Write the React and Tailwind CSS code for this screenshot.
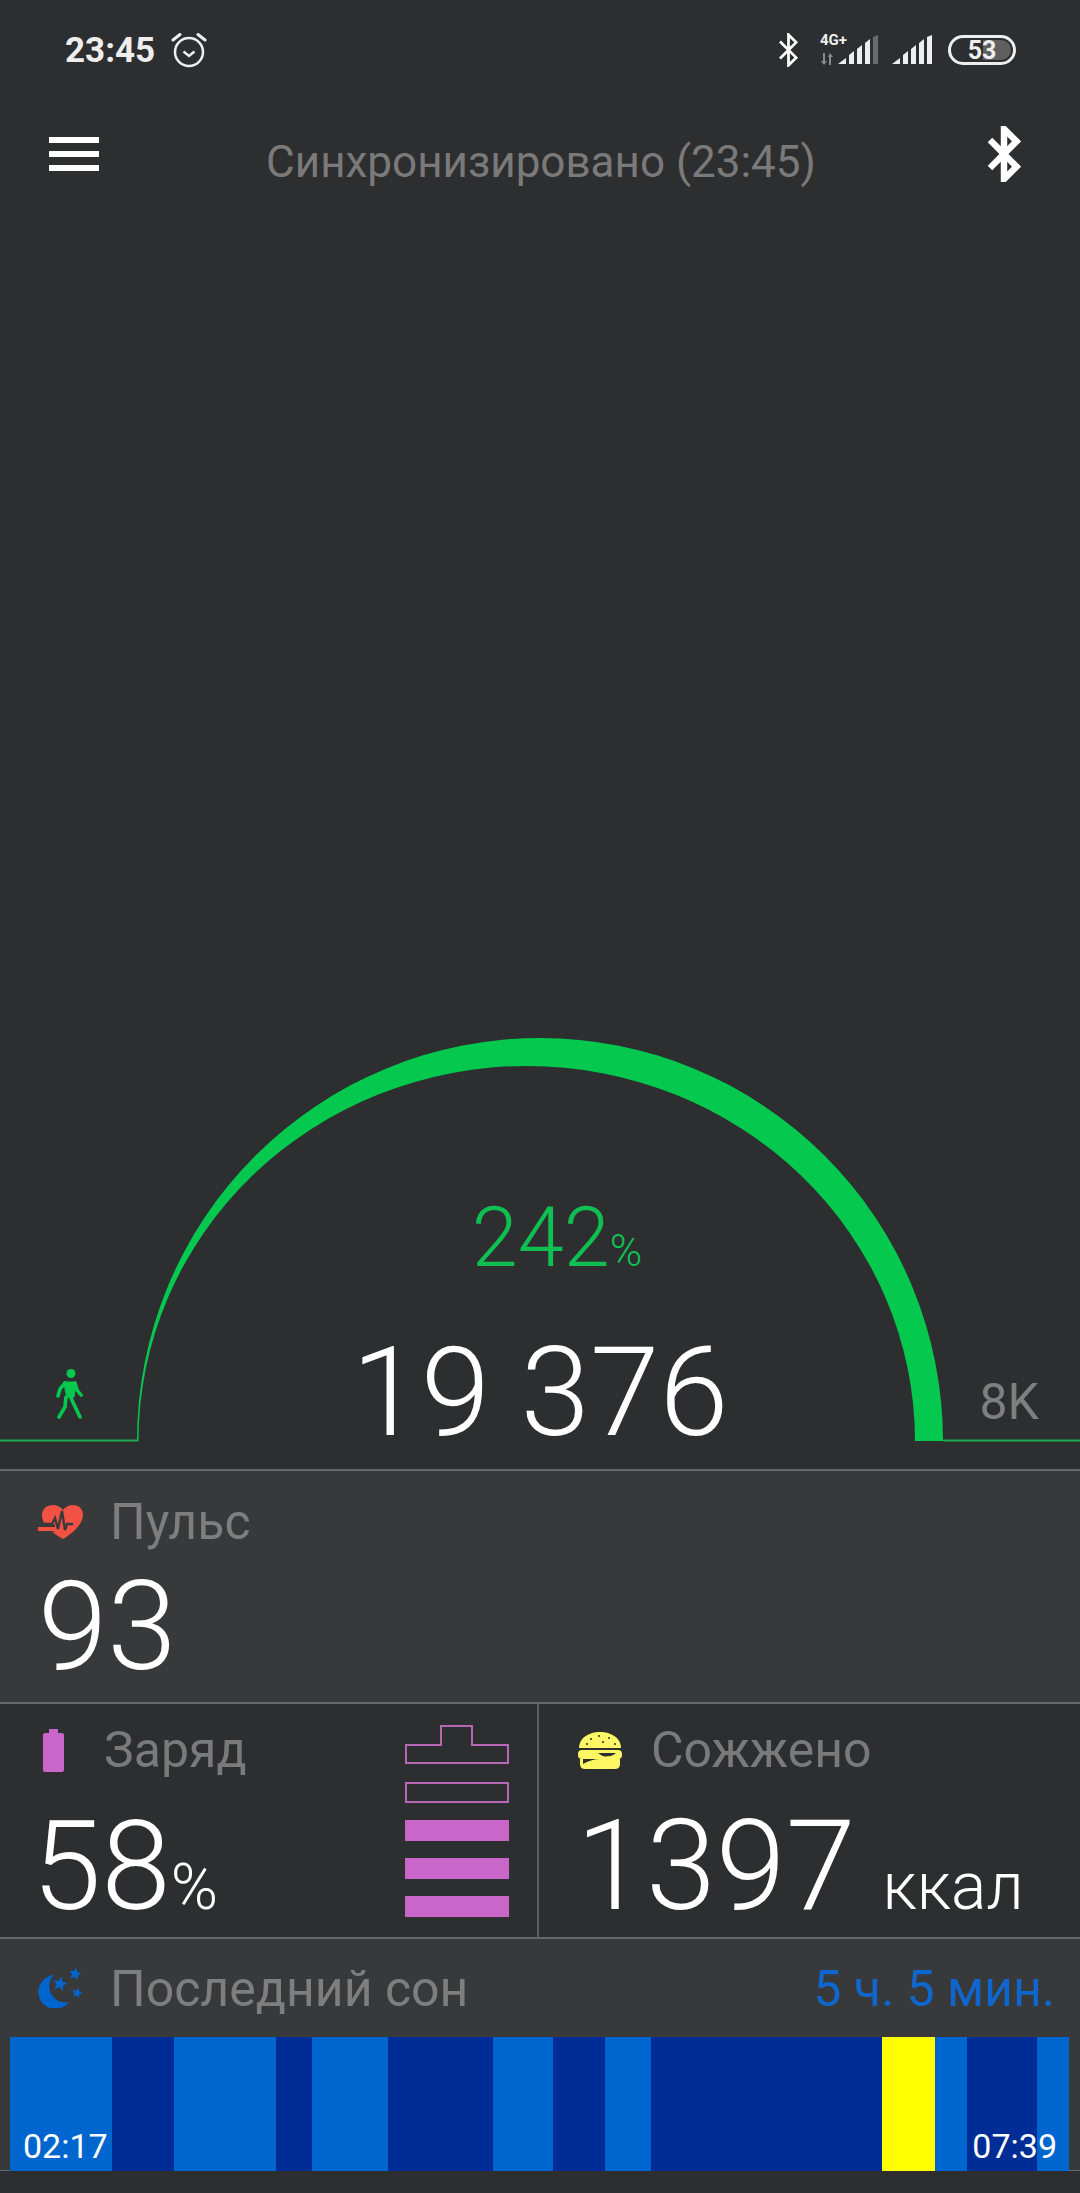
// Экран браслета: шаги, пульс, заряд, калории и сон
const sleepSegments = [
  "w-[102px] bg-[#0066cf]",
  "w-[62px] bg-[#002c96]",
  "w-[102px] bg-[#0066cf]",
  "w-[36px] bg-[#002c96]",
  "w-[76px] bg-[#0066cf]",
  "w-[105px] bg-[#002c96]",
  "w-[60px] bg-[#0066cf]",
  "w-[52px] bg-[#002c96]",
  "w-[46px] bg-[#0066cf]",
  "w-[231px] bg-[#002c96]",
  "w-[53px] bg-[#ffff00]",
  "w-[32px] bg-[#0066cf]",
  "w-[70px] bg-[#002c96]",
  "w-[32px] bg-[#0066cf]",
];

function starPoints(cx, cy, r) {
  const pts = [];
  for (let i = 0; i < 10; i++) {
    const rad = i % 2 === 0 ? r : r * 0.45;
    const a = -Math.PI / 2 + 0.2 + (i * Math.PI) / 5;
    pts.push(`${cx + rad * Math.cos(a)},${cy + rad * Math.sin(a)}`);
  }
  return pts.join(" ");
}

function BluetoothIcon({ className, strokeWidth }) {
  return (
    <svg className={className} viewBox="0 0 24 40" fill="none" stroke="#fff" strokeWidth={strokeWidth}>
      <path d="M2 10 L21 29 L12 38 V2 L21 11 L2 30" />
    </svg>
  );
}

function SignalIcon({ lastColor }) {
  return (
    <svg className="w-[40px] h-[30px]" viewBox="0 0 40 30" fill="#eeeeee">
      <path d="M0 29 L8 23 V29 Z" />
      <path d="M11 20 L16 16 V29 H11 Z" />
      <path d="M19 14 L24 10 V29 H19 Z" />
      <path d="M27 8 L32 4 V29 H27 Z" />
      <path d="M35 2 L40 0 V29 H35 Z" fill={lastColor} />
    </svg>
  );
}

function StatusBar() {
  return (
    <div className="h-[100px] flex items-center justify-between pl-[65px] pr-[64px]">
      <div className="flex items-center gap-[16px]">
        <span className="text-[35px] font-bold text-[#eeeeee] leading-none">23:45</span>
        <svg className="w-[36px] h-[36px]" viewBox="0 0 36 36" fill="none" stroke="#eeeeee" strokeWidth="2.5">
          <circle cx="18" cy="20" r="14" />
          <path d="M12.5 19.5 L18 24 L23.5 19.5" />
          <path d="M2 8 L9 2.5 M34 8 L27 2.5" strokeLinecap="round" strokeWidth="3" />
        </svg>
      </div>
      <div className="flex items-center">
        <BluetoothIcon className="w-[21px] h-[34px]" strokeWidth="3.2" />
        <div className="relative w-[58px] h-[30px] ml-[21px]">
          <span className="absolute left-0 -top-[2px] text-[15px] font-bold text-[#eeeeee] leading-none">4G+</span>
          <svg className="absolute left-0 bottom-0 w-[13px] h-[12px]" viewBox="0 0 13 12" fill="#8a8a8a">
            <path d="M3 0 H5 V8 L7 8 L4 12 L1 8 H3 Z" />
            <path d="M9 12 H11 V4 H13 L10 0 L8 4 H9 Z" />
          </svg>
          <div className="absolute right-0 top-0">
            <SignalIcon lastColor="#6a6a6a" />
          </div>
        </div>
        <div className="ml-[14px]">
          <SignalIcon lastColor="#eeeeee" />
        </div>
        <div className="relative ml-[16px] w-[68px] h-[30px] rounded-full border-[3px] border-[#eeeeee] flex items-center justify-center overflow-hidden">
          <div className="absolute right-[2px] top-[2px] bottom-[2px] w-[28px] rounded-r-full bg-[#5f5f5f]" />
          <span className="relative text-[25px] font-bold text-[#eeeeee] leading-none">53</span>
        </div>
      </div>
    </div>
  );
}

function Header() {
  return (
    <div className="h-[108px] grid grid-cols-[1fr_auto_1fr] items-center pl-[49px] pr-[59px]">
      <div className="flex flex-col gap-[8px] w-[50px]">
        <div className="h-[6px] bg-white" />
        <div className="h-[6px] bg-white" />
        <div className="h-[6px] bg-white" />
      </div>
      <span className="text-[44px] text-[#7a7a7a] leading-none mt-[16px] ml-[12px]">Синхронизировано (23:45)</span>
      <div className="flex justify-end">
        <BluetoothIcon className="w-[34px] h-[56px]" strokeWidth="4.6" />
      </div>
    </div>
  );
}

function Gauge() {
  return (
    <div className="relative flex-1 flex flex-col items-center justify-end pb-[13px]">
      <svg className="absolute left-0 bottom-[26px] w-[1080px] h-[405px]" viewBox="0 1038 1080 405">
        <path d="M0 1440.5 H138 M943 1440.5 H1080" stroke="#1fa750" strokeWidth="2" fill="none" />
        <path d="M137 1441 A403 403 0 0 1 943 1441 H915 A388.25 375 0 0 0 138.5 1441 Z" fill="#05c94e" />
      </svg>
      <svg className="absolute left-[56px] bottom-[50px] w-[27px] h-[50px]" viewBox="0 0 27 50" fill="none" stroke="#05c94e" strokeWidth="3.6" strokeLinecap="round" strokeLinejoin="round">
        <circle cx="15" cy="4.5" r="4.5" fill="#05c94e" stroke="none" />
        <path d="M8 13 H20 L18 28 H11 Z" fill="#05c94e" strokeWidth="1" />
        <path d="M9 14 L4 20 L2 27" />
        <path d="M19 14 L21 21 L25 26" />
        <path d="M14 27 L24 48" />
        <path d="M10 28 L9 38 L3 48" />
      </svg>
      <span className="absolute right-[41px] bottom-[42px] text-[50px] text-[#7f7f7f] leading-none">8K</span>
      <div className="relative flex items-baseline ml-[34px] text-[#0fbf52] font-light">
        <span className="text-[83px] leading-[84px]">242</span>
        <span className="text-[44px] leading-none">%</span>
      </div>
      <div className="relative mt-[49px] text-[125px] leading-[127px] font-light text-white">19 376</div>
    </div>
  );
}

function PulsePanel() {
  return (
    <div className="h-[233px] bg-[#38393b] border-t-2 border-[#66676a] pl-[38px] pt-[22px]">
      <div className="flex items-center h-[58px]">
        <svg className="w-[45px] h-[36px]" viewBox="0 0 45 36">
          <path d="M25 35 C20 32 12 27 8 22 C5 18 4 14 4 11 C4 5 9 1 15 1 C19 1 23 3 25 6 C27 3 31 1 35 1 C41 1 45 5 45 11 C45 20 34 30 25 35 Z" fill="#f25244" />
          <path d="M0 24 H17" stroke="#38393b" strokeWidth="7" />
          <path d="M1 25 H17" stroke="#f25244" strokeWidth="4" strokeLinecap="round" />
          <path d="M5 20 H14 L17 14 L20 25 L24 7 L27 26 L29 20 H35" stroke="#38393b" strokeWidth="2.4" fill="none" />
        </svg>
        <span className="ml-[27px] text-[50px] text-[#7e7e7e] leading-none">Пульс</span>
      </div>
      <div className="mt-[12px] text-[125px] leading-[127px] font-light text-white">93</div>
    </div>
  );
}

function BatteryPanel() {
  return (
    <div className="w-[539px] border-r-2 border-[#5c5d60] pl-[32px] pr-[28px] flex justify-between">
      <div className="pt-[17px]">
        <div className="flex items-center h-[58px]">
          <svg className="ml-[11px] w-[21px] h-[43px]" viewBox="0 0 21 43" fill="#c966c9">
            <path d="M6 0 H15 V4 H19 Q21 4 21 6 V41 Q21 43 19 43 H2 Q0 43 0 41 V6 Q0 4 2 4 H6 Z" />
          </svg>
          <span className="ml-[40px] text-[50px] text-[#7a7a7a] leading-none">Заряд</span>
        </div>
        <div className="mt-[24px] flex items-baseline font-light text-white">
          <span className="text-[125px] leading-[127px]">58</span>
          <span className="text-[64px] leading-none">%</span>
        </div>
      </div>
      <div className="pt-[21px] w-[104px]">
        <svg className="w-[104px] h-[39px]" viewBox="0 0 104 39" fill="none" stroke="#b566b5" strokeWidth="2">
          <path d="M1 20 H36 V1 H67 V20 H103 V38 H1 Z" />
        </svg>
        <div className="mt-[18px] h-[21px] border-2 border-[#b566b5]" />
        <div className="mt-[17px] h-[21px] bg-[#c966c9]" />
        <div className="mt-[17px] h-[21px] bg-[#c966c9]" />
        <div className="mt-[17px] h-[21px] bg-[#c966c9]" />
      </div>
    </div>
  );
}

function CaloriesPanel() {
  return (
    <div className="flex-1 pl-[39px] pt-[17px]">
      <div className="flex items-center h-[58px]">
        <svg className="w-[44px] h-[37px]" viewBox="0 0 44 37">
          <path d="M1 16 C1 6 11 0 22 0 C33 0 43 6 43 16 Z" fill="#fdf764" />
          <path d="M12 7 h2 M20 4 h2 M30 6 h2 M8 12 h2 M24 10 h2 M36 12 h2" stroke="#2d2e30" strokeWidth="1.4" />
          <rect x="0" y="18" width="44" height="9" rx="4" fill="#fdf764" />
          <path d="M20 21 Q26 26 30 24 Q34 25 38 21 Z" fill="#2d2e30" />
          <path d="M2 27 H42 V32 Q42 37 37 37 H7 Q2 37 2 32 Z" fill="#fdf764" />
          <path d="M5 32 Q14 27 22 27 H5 Z" fill="#2d2e30" />
        </svg>
        <span className="ml-[29px] text-[50px] text-[#7a7a7a] leading-none">Сожжено</span>
      </div>
      <div className="mt-[24px] -ml-[2px] flex items-baseline font-light text-white">
        <span className="text-[126px] leading-[127px]">1397</span>
        <span className="ml-[27px] text-[66px] leading-none">ккал</span>
      </div>
    </div>
  );
}

function SleepPanel() {
  return (
    <div className="h-[234px] bg-[#38393b] border-t-2 border-b border-[#66676a] flex flex-col">
      <div className="flex-1 flex items-center justify-between pl-[38px] pr-[25px]">
        <div className="flex items-center">
          <svg className="w-[45px] h-[40px]" viewBox="0 0 45 40" fill="#0066cf">
            <path d="M16 7 A17 17 0 1 0 31 34 A16 16 0 0 1 16 7 Z" />
            <polygon points={starPoints(22, 16, 7.5)} />
            <polygon points={starPoints(37, 6, 6.5)} />
            <polygon points={starPoints(39, 25, 5.5)} />
          </svg>
          <span className="ml-[27px] mt-[1px] text-[50px] text-[#7e7e7e] leading-none">Последний сон</span>
        </div>
        <span className="mt-[1px] text-[50px] text-[#0f66cc] leading-none">5 ч. 5 мин.</span>
      </div>
      <div className="relative h-[134px] -mb-px mx-[10px] flex">
        {sleepSegments.map((s, i) => (
          <div key={i} className={s} />
        ))}
        <span className="absolute left-[13px] bottom-[5px] text-[34px] text-white leading-[40px]">02:17</span>
        <span className="absolute right-[13px] bottom-[5px] text-[34px] text-white leading-[40px]">07:39</span>
      </div>
    </div>
  );
}

export default function App() {
  return (
    <div className="w-[1080px] h-[2193px] bg-[#2d2e30] font-[Roboto,sans-serif] flex flex-col overflow-hidden">
      <StatusBar />
      <Header />
      <Gauge />
      <PulsePanel />
      <div className="h-[235px] flex border-t-2 border-[#66676a]">
        <BatteryPanel />
        <CaloriesPanel />
      </div>
      <SleepPanel />
      <div className="h-[22px]" />
    </div>
  );
}
